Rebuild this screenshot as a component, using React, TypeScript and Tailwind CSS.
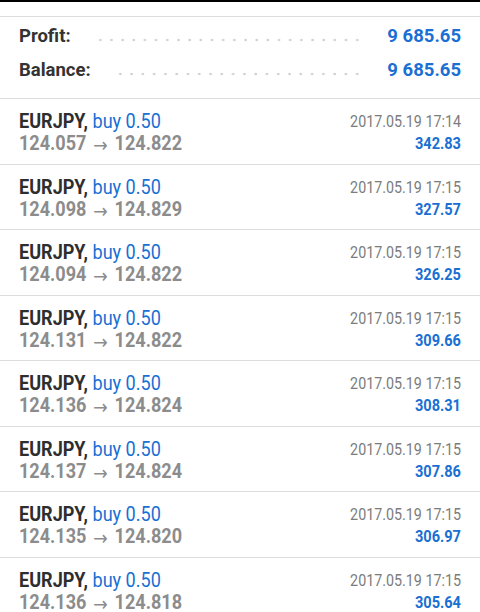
import type { FC } from "react";

type Deal = {
  open: string;
  close: string;
  time: string;
  profit: string;
};

const deals: Deal[] = [
  { open: "124.057", close: "124.822", time: "2017.05.19 17:14", profit: "342.83" },
  { open: "124.098", close: "124.829", time: "2017.05.19 17:15", profit: "327.57" },
  { open: "124.094", close: "124.822", time: "2017.05.19 17:15", profit: "326.25" },
  { open: "124.131", close: "124.822", time: "2017.05.19 17:15", profit: "309.66" },
  { open: "124.136", close: "124.824", time: "2017.05.19 17:15", profit: "308.31" },
  { open: "124.137", close: "124.824", time: "2017.05.19 17:15", profit: "307.86" },
  { open: "124.135", close: "124.820", time: "2017.05.19 17:15", profit: "306.97" },
  { open: "124.136", close: "124.818", time: "2017.05.19 17:15", profit: "305.64" },
];

const SummaryLine: FC<{ label: string; value: string }> = ({ label, value }) => (
  <div className="flex items-center h-[34px]">
    <span className="text-[18.5px] font-bold text-[#333]">{label}</span>
    <span className="flex-1 h-[4px] mx-[24px] translate-y-[3px] bg-[radial-gradient(circle,#d2d2d2_1.1px,transparent_1.6px)] bg-[length:10.8px_4px] bg-repeat-space" />
    <span className="text-[18.5px] font-bold text-[#1a6fd3]">{value}</span>
  </div>
);

const DealRow: FC<{ d: Deal }> = ({ d }) => (
  <div className="h-[65.57px] border-t border-[#dcdcdc] px-[19px] pt-[11px] flex justify-between leading-[22px]">
    <div className="origin-left scale-x-[0.86] whitespace-nowrap">
      <div className="text-[21px]">
        <span className="font-bold text-[#2e2e2e]">EURJPY,</span>{" "}
        <span className="text-[#1a6fd3]">buy 0.50</span>
      </div>
      <div className="text-[21px] font-bold text-[#8c8c8c]">
        {d.open}
        <span className="inline-block mx-[8px] translate-y-[2px] font-normal text-[20px] font-['DejaVu_Sans',sans-serif]">→</span>
        {d.close}
      </div>
    </div>
    <div className="origin-right scale-x-[0.84] text-right whitespace-nowrap">
      <div className="text-[17px] text-[#7c7c7c]">{d.time}</div>
      <div className="text-[17px] font-bold text-[#1a6fd3] scale-x-[1.02] origin-right">{d.profit}</div>
    </div>
  </div>
);

export default function App() {
  return (
    <div className="w-[480px] h-[612px] overflow-hidden bg-white font-['Roboto',sans-serif]">
      <div className="h-[2px] bg-black" />
      <div className="h-[14px]" />
      <div className="border-t border-[#dcdcdc] px-[19px] pt-[3px] pb-[10px]">
        <SummaryLine label="Profit:" value="9 685.65" />
        <SummaryLine label="Balance:" value="9 685.65" />
      </div>
      {deals.map((d, i) => (
        <DealRow key={i} d={d} />
      ))}
    </div>
  );
}
